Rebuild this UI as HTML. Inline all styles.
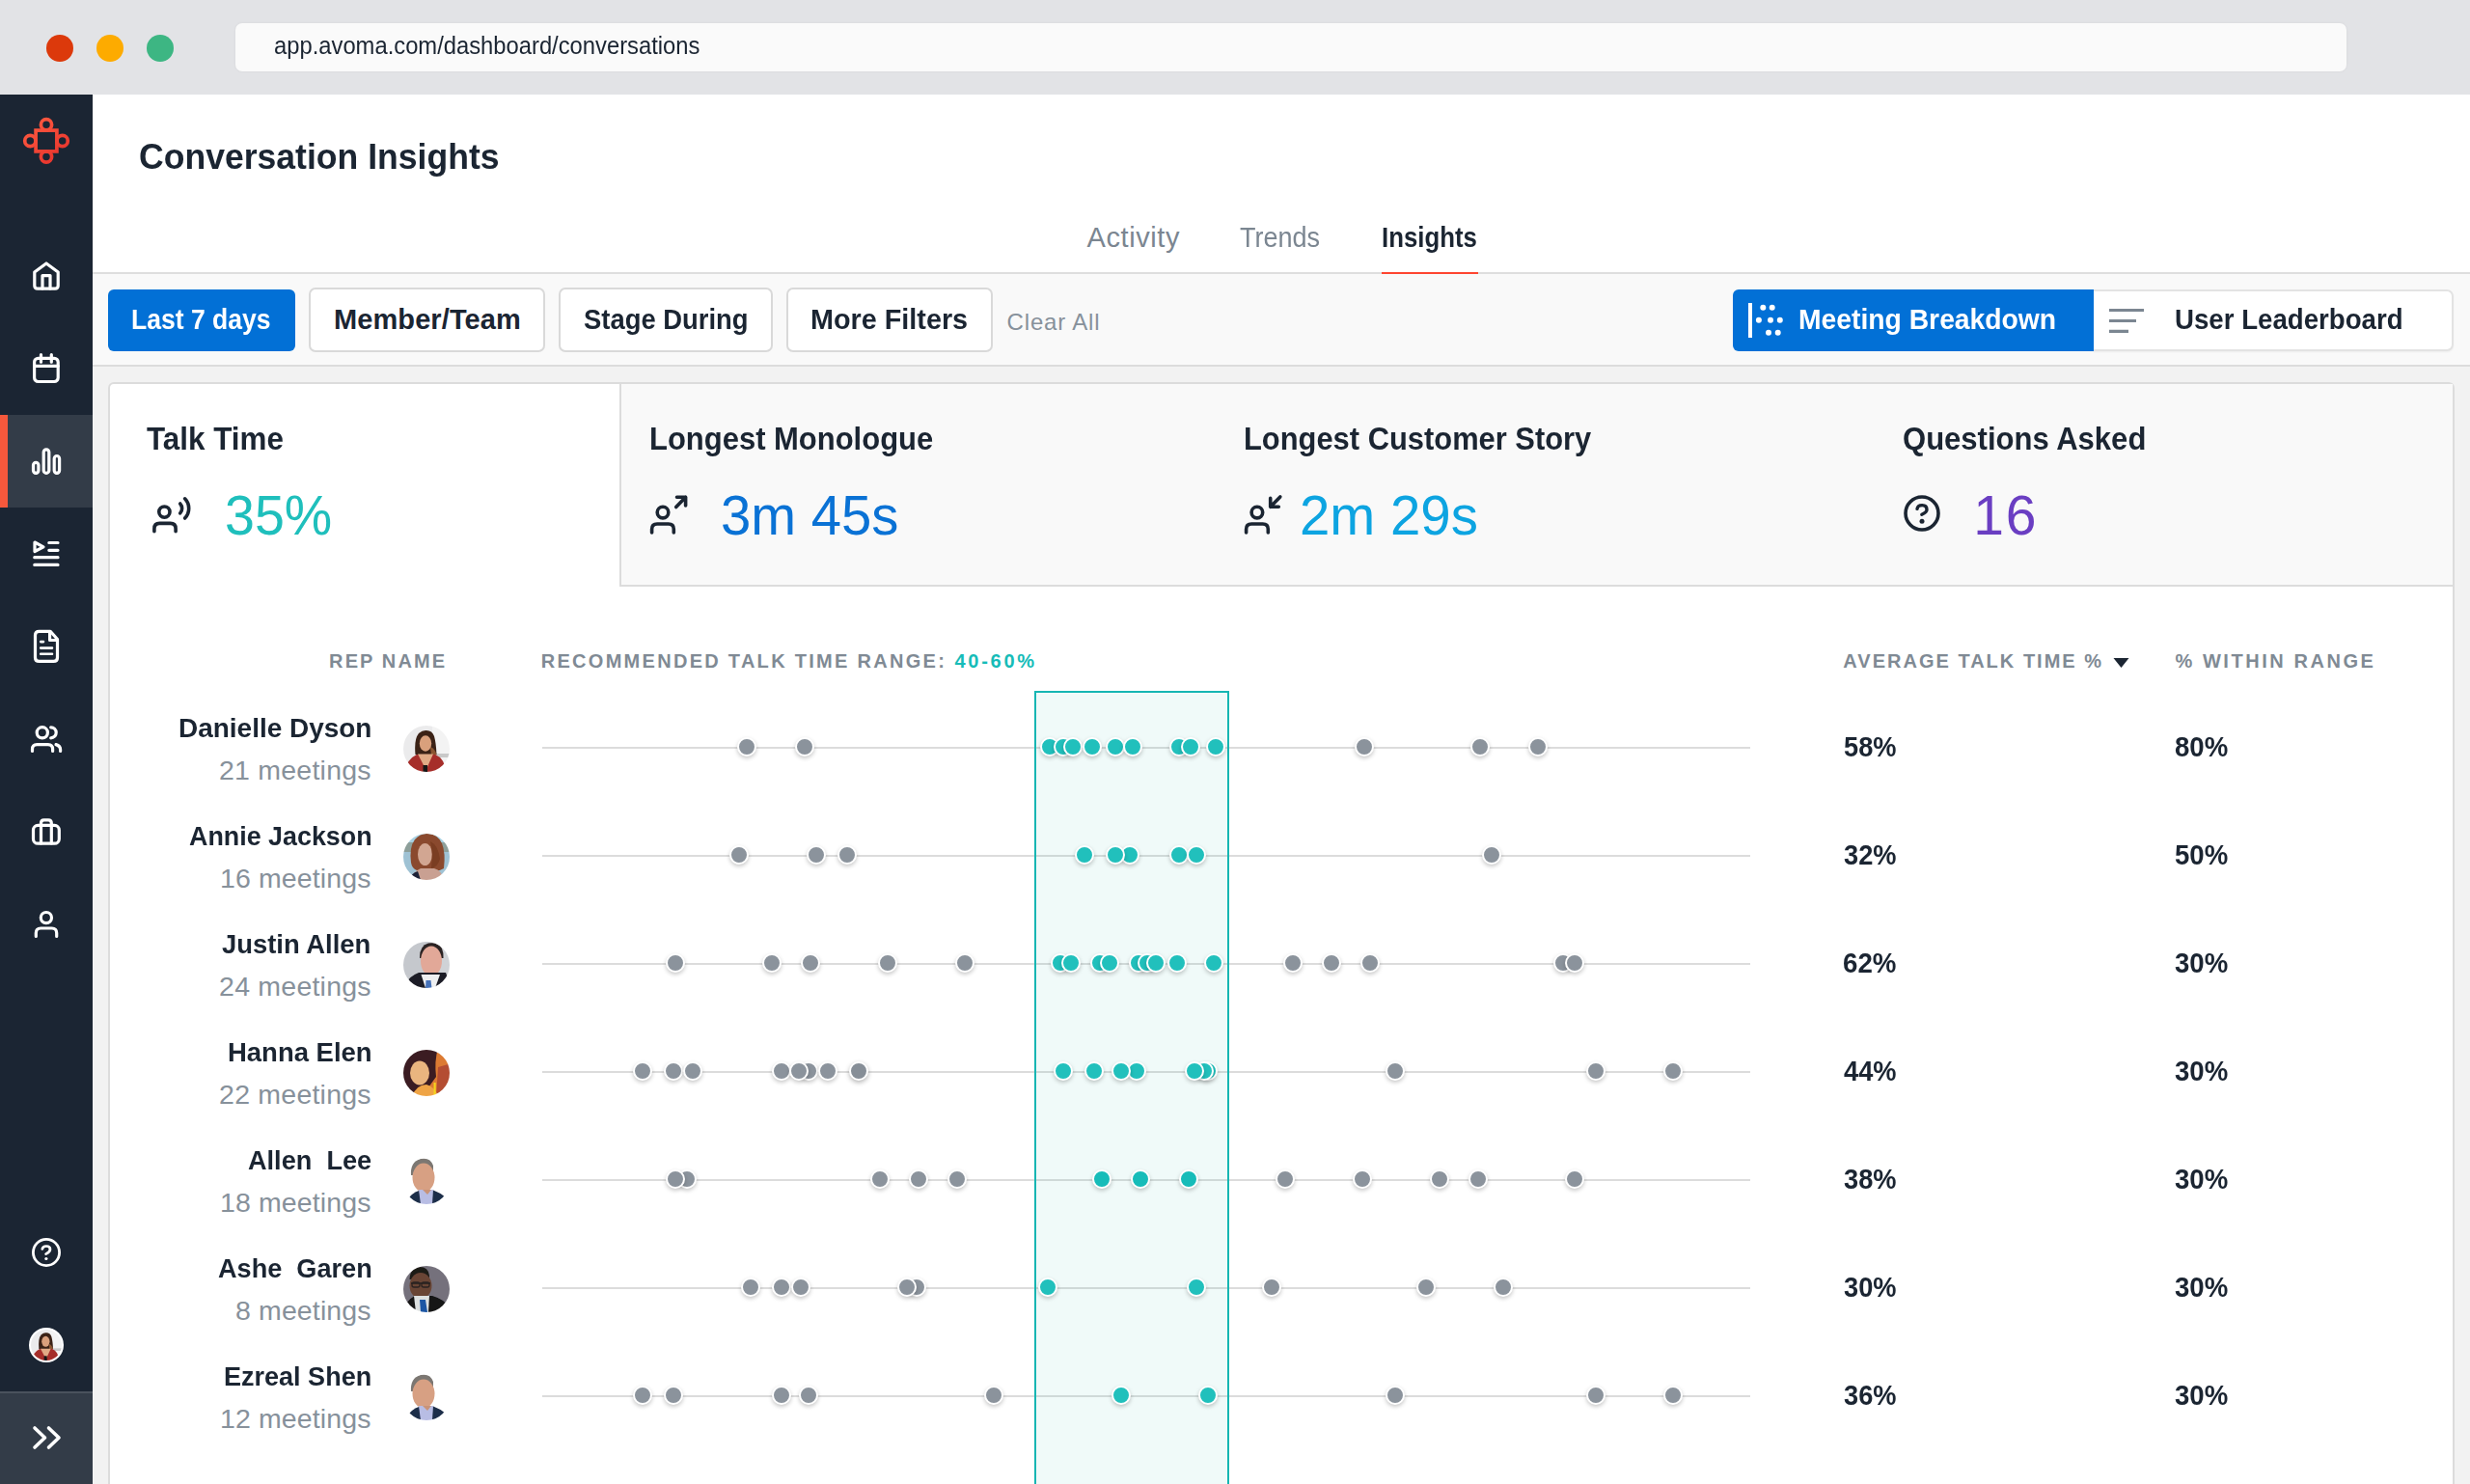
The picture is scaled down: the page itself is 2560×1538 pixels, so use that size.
<!DOCTYPE html><html><head><meta charset="utf-8"><title>Conversation Insights</title>
<style>
html,body{margin:0;padding:0;}
body{width:2560px;height:1538px;overflow:hidden;position:relative;background:#ffffff;font-family:'Liberation Sans', sans-serif;}
.t{position:absolute;white-space:pre;font-family:'Liberation Sans', sans-serif;}
.d{position:absolute;width:16px;height:16px;border:2px solid #fff;border-radius:50%;box-shadow:0 2px 4px rgba(0,0,0,0.22);}
.g{background:#8b939c;}
.c{background:#21c0bc;}
</style></head><body>

<div style="position:absolute;left:0px;top:0px;width:2560px;height:98px;background:#e2e3e6;"></div>
<div style="position:absolute;left:48px;top:36px;width:28px;height:28px;background:#dc390b;border-radius:50%;"></div>
<div style="position:absolute;left:100px;top:36px;width:28px;height:28px;background:#fdab00;border-radius:50%;"></div>
<div style="position:absolute;left:152px;top:36px;width:28px;height:28px;background:#3db683;border-radius:50%;"></div>
<div style="position:absolute;left:244px;top:24px;width:2188px;height:50px;background:#fafafa;border-radius:7px;box-shadow:0 0 3px rgba(0,0,0,0.06);"></div>
<div class="t" style="left:283.55px;top:32.34px;font-size:25px;line-height:30px;color:#1b2532;transform:scaleX(0.9510);transform-origin:0 0;">app.avoma.com/dashboard/conversations</div>
<div style="position:absolute;left:0px;top:98px;width:96px;height:1440px;background:#1b2533;"></div>
<div style="position:absolute;left:0px;top:430px;width:96px;height:96px;background:#333c48;"></div>
<div style="position:absolute;left:0px;top:430px;width:8px;height:96px;background:#f5583c;"></div>
<div style="position:absolute;left:0px;top:1442px;width:96px;height:2px;background:#4a525d;"></div>
<div style="position:absolute;left:0px;top:1444px;width:96px;height:94px;background:#333c48;"></div>
<div class="t" style="left:143.64px;top:140.88px;font-size:37px;line-height:44px;font-weight:700;color:#1b2532;transform:scaleX(0.9613);transform-origin:0 0;">Conversation Insights</div>
<div class="t" style="left:1126.60px;top:229.45px;font-size:29px;line-height:35px;color:#7b8691;letter-spacing:0.580px;">Activity</div>
<div class="t" style="left:1284.50px;top:229.45px;font-size:29px;line-height:35px;color:#7b8691;transform:scaleX(0.9303);transform-origin:0 0;">Trends</div>
<div class="t" style="left:1432.11px;top:229.45px;font-size:29px;line-height:35px;font-weight:700;color:#1b2532;transform:scaleX(0.8896);transform-origin:0 0;">Insights</div>
<div style="position:absolute;left:96px;top:282px;width:2464px;height:2px;background:#dedede;"></div>
<div style="position:absolute;left:1432px;top:282px;width:100px;height:2px;background:#fe4530;"></div>
<div style="position:absolute;left:96px;top:284px;width:2464px;height:94px;background:#f9f9f9;"></div>
<div style="position:absolute;left:96px;top:378px;width:2464px;height:2px;background:#dcdcdc;"></div>
<div style="position:absolute;left:96px;top:380px;width:2464px;height:1158px;background:#f2f2f2;"></div>
<div style="position:absolute;left:112px;top:300px;width:194px;height:64px;background:#0270d6;border-radius:6px;"></div>
<div class="t" style="left:136.08px;top:314.45px;font-size:29px;line-height:35px;font-weight:700;color:#ffffff;transform:scaleX(0.9150);transform-origin:0 0;">Last 7 days</div>
<div style="position:absolute;left:320px;top:298px;width:245px;height:67px;background:#ffffff;border:2px solid #d9d9d9;border-radius:7px;box-sizing:border-box;"></div>
<div class="t" style="left:346.00px;top:314.45px;font-size:29px;line-height:35px;font-weight:700;color:#1b2532;letter-spacing:0.092px;">Member/Team</div>
<div style="position:absolute;left:579px;top:298px;width:222px;height:67px;background:#ffffff;border:2px solid #d9d9d9;border-radius:7px;box-sizing:border-box;"></div>
<div class="t" style="left:604.50px;top:314.45px;font-size:29px;line-height:35px;font-weight:700;color:#1b2532;transform:scaleX(0.9455);transform-origin:0 0;">Stage During</div>
<div style="position:absolute;left:815px;top:298px;width:214px;height:67px;background:#ffffff;border:2px solid #d9d9d9;border-radius:7px;box-sizing:border-box;"></div>
<div class="t" style="left:840.01px;top:314.45px;font-size:29px;line-height:35px;font-weight:700;color:#1b2532;transform:scaleX(0.9923);transform-origin:0 0;">More Filters</div>
<div class="t" style="left:1043.60px;top:319.18px;font-size:24px;line-height:29px;color:#87919b;letter-spacing:0.830px;">Clear All</div>
<div style="position:absolute;left:2170px;top:300px;width:373px;height:64px;background:#ffffff;border:2px solid #e3e3e3;border-left:none;border-radius:0 7px 7px 0;box-sizing:border-box;box-shadow:0 1px 2px rgba(0,0,0,0.05);"></div>
<div style="position:absolute;left:1796px;top:300px;width:374px;height:64px;background:#0270d6;border-radius:6px 0 0 6px;"></div>
<div class="t" style="left:1864.32px;top:314.45px;font-size:29px;line-height:35px;font-weight:700;color:#ffffff;transform:scaleX(0.9752);transform-origin:0 0;">Meeting Breakdown</div>
<div class="t" style="left:2253.65px;top:314.45px;font-size:29px;line-height:35px;font-weight:700;color:#1b2532;transform:scaleX(0.9532);transform-origin:0 0;">User Leaderboard</div>
<div style="position:absolute;left:112px;top:396px;width:2432px;height:1152px;background:#ffffff;border:2px solid #dcdcdc;border-radius:6px;box-sizing:border-box;"></div>
<div style="position:absolute;left:642px;top:398px;width:1900px;height:210px;background:#f9f9f9;border-left:2px solid #dcdcdc;border-bottom:2px solid #dcdcdc;box-sizing:border-box;"></div>
<div class="t" style="left:152.40px;top:434.77px;font-size:33px;line-height:40px;font-weight:700;color:#1b2532;transform:scaleX(0.9515);transform-origin:0 0;">Talk Time</div>
<div class="t" style="left:673.32px;top:434.57px;font-size:33px;line-height:40px;font-weight:700;color:#1b2532;transform:scaleX(0.9386);transform-origin:0 0;">Longest Monologue</div>
<div class="t" style="left:1289.13px;top:434.57px;font-size:33px;line-height:40px;font-weight:700;color:#1b2532;transform:scaleX(0.9357);transform-origin:0 0;">Longest Customer Story</div>
<div class="t" style="left:1971.66px;top:435.07px;font-size:33px;line-height:40px;font-weight:700;color:#1b2532;transform:scaleX(0.9403);transform-origin:0 0;">Questions Asked</div>
<div class="t" style="left:233.05px;top:500.45px;font-size:57px;line-height:68px;color:#1fbfbc;transform:scaleX(0.9746);transform-origin:0 0;">35%</div>
<div class="t" style="left:747.33px;top:500.05px;font-size:57px;line-height:68px;color:#0a72d5;transform:scaleX(0.9868);transform-origin:0 0;">3m 45s</div>
<div class="t" style="left:1346.72px;top:500.05px;font-size:57px;line-height:68px;color:#0da4e1;transform:scaleX(0.9890);transform-origin:0 0;">2m 29s</div>
<div class="t" style="left:2045.20px;top:500.05px;font-size:57px;line-height:68px;color:#6a3ec2;letter-spacing:1.799px;">16</div>
<div class="t" style="left:341.10px;top:673.07px;font-size:20px;line-height:24px;font-weight:700;color:#808a94;letter-spacing:2.110px;">REP NAME</div>
<div class="t" style="left:560.70px;top:673.07px;font-size:20px;line-height:24px;font-weight:700;color:#808a94;letter-spacing:2.292px;">RECOMMENDED TALK TIME RANGE:</div>
<div class="t" style="left:989.50px;top:673.07px;font-size:20px;line-height:24px;font-weight:700;color:#16bcb8;letter-spacing:2.730px;">40-60%</div>
<div class="t" style="left:1910.30px;top:673.07px;font-size:20px;line-height:24px;font-weight:700;color:#808a94;letter-spacing:2.017px;">AVERAGE TALK TIME %</div>
<div class="t" style="left:2254.50px;top:673.07px;font-size:20px;line-height:24px;font-weight:700;color:#808a94;letter-spacing:2.548px;">% WITHIN RANGE</div>
<svg style="position:absolute;left:0;top:0" width="2560" height="1538"><path d="M2190.5,682 L2206.5,682 L2198.5,692 Z" fill="#1b2532"/></svg>
<div class="t" style="left:185.22px;top:736.82px;font-size:28.5px;line-height:34px;font-weight:700;color:#1b2532;transform:scaleX(0.9811);transform-origin:0 0;">Danielle Dyson</div>
<div class="t" style="left:227.00px;top:781.42px;font-size:28.5px;line-height:34px;color:#87919b;letter-spacing:0.229px;">21 meetings</div>
<div class="t" style="left:1911.00px;top:756.95px;font-size:29px;line-height:35px;font-weight:700;color:#1b2532;transform:scaleX(0.9389);transform-origin:0 0;">58%</div>
<div class="t" style="left:2254.40px;top:756.95px;font-size:29px;line-height:35px;font-weight:700;color:#1b2532;transform:scaleX(0.9510);transform-origin:0 0;">80%</div>
<div class="t" style="left:196.00px;top:848.82px;font-size:28.5px;line-height:34px;font-weight:700;color:#1b2532;transform:scaleX(0.9427);transform-origin:0 0;">Annie Jackson</div>
<div class="t" style="left:227.90px;top:893.42px;font-size:28.5px;line-height:34px;color:#87919b;letter-spacing:0.139px;">16 meetings</div>
<div class="t" style="left:1911.00px;top:868.95px;font-size:29px;line-height:35px;font-weight:700;color:#1b2532;transform:scaleX(0.9389);transform-origin:0 0;">32%</div>
<div class="t" style="left:2254.40px;top:868.95px;font-size:29px;line-height:35px;font-weight:700;color:#1b2532;transform:scaleX(0.9510);transform-origin:0 0;">50%</div>
<div class="t" style="left:230.30px;top:960.82px;font-size:28.5px;line-height:34px;font-weight:700;color:#1b2532;transform:scaleX(0.9618);transform-origin:0 0;">Justin Allen</div>
<div class="t" style="left:227.10px;top:1005.42px;font-size:28.5px;line-height:34px;color:#87919b;letter-spacing:0.219px;">24 meetings</div>
<div class="t" style="left:1910.04px;top:980.95px;font-size:29px;line-height:35px;font-weight:700;color:#1b2532;transform:scaleX(0.9553);transform-origin:0 0;">62%</div>
<div class="t" style="left:2254.40px;top:980.95px;font-size:29px;line-height:35px;font-weight:700;color:#1b2532;transform:scaleX(0.9510);transform-origin:0 0;">30%</div>
<div class="t" style="left:236.04px;top:1072.82px;font-size:28.5px;line-height:34px;font-weight:700;color:#1b2532;transform:scaleX(0.9640);transform-origin:0 0;">Hanna Elen</div>
<div class="t" style="left:227.10px;top:1117.42px;font-size:28.5px;line-height:34px;color:#87919b;letter-spacing:0.219px;">22 meetings</div>
<div class="t" style="left:1911.00px;top:1092.95px;font-size:29px;line-height:35px;font-weight:700;color:#1b2532;transform:scaleX(0.9389);transform-origin:0 0;">44%</div>
<div class="t" style="left:2254.40px;top:1092.95px;font-size:29px;line-height:35px;font-weight:700;color:#1b2532;transform:scaleX(0.9510);transform-origin:0 0;">30%</div>
<div class="t" style="left:257.00px;top:1184.82px;font-size:28.5px;line-height:34px;font-weight:700;color:#1b2532;transform:scaleX(0.9516);transform-origin:0 0;">Allen &nbsp;Lee</div>
<div class="t" style="left:227.90px;top:1229.42px;font-size:28.5px;line-height:34px;color:#87919b;letter-spacing:0.139px;">18 meetings</div>
<div class="t" style="left:1911.00px;top:1204.95px;font-size:29px;line-height:35px;font-weight:700;color:#1b2532;transform:scaleX(0.9389);transform-origin:0 0;">38%</div>
<div class="t" style="left:2254.40px;top:1204.95px;font-size:29px;line-height:35px;font-weight:700;color:#1b2532;transform:scaleX(0.9510);transform-origin:0 0;">30%</div>
<div class="t" style="left:225.90px;top:1296.82px;font-size:28.5px;line-height:34px;font-weight:700;color:#1b2532;transform:scaleX(0.9514);transform-origin:0 0;">Ashe &nbsp;Garen</div>
<div class="t" style="left:244.00px;top:1341.42px;font-size:28.5px;line-height:34px;color:#87919b;letter-spacing:0.127px;">8 meetings</div>
<div class="t" style="left:1911.00px;top:1316.95px;font-size:29px;line-height:35px;font-weight:700;color:#1b2532;transform:scaleX(0.9389);transform-origin:0 0;">30%</div>
<div class="t" style="left:2254.40px;top:1316.95px;font-size:29px;line-height:35px;font-weight:700;color:#1b2532;transform:scaleX(0.9510);transform-origin:0 0;">30%</div>
<div class="t" style="left:232.45px;top:1408.82px;font-size:28.5px;line-height:34px;font-weight:700;color:#1b2532;transform:scaleX(0.9481);transform-origin:0 0;">Ezreal Shen</div>
<div class="t" style="left:227.90px;top:1453.42px;font-size:28.5px;line-height:34px;color:#87919b;letter-spacing:0.139px;">12 meetings</div>
<div class="t" style="left:1911.00px;top:1428.95px;font-size:29px;line-height:35px;font-weight:700;color:#1b2532;transform:scaleX(0.9389);transform-origin:0 0;">36%</div>
<div class="t" style="left:2254.40px;top:1428.95px;font-size:29px;line-height:35px;font-weight:700;color:#1b2532;transform:scaleX(0.9510);transform-origin:0 0;">30%</div>
<div style="position:absolute;left:562px;top:774px;width:1252px;height:2px;background:#dcdcdc;"></div>
<div style="position:absolute;left:562px;top:886px;width:1252px;height:2px;background:#dcdcdc;"></div>
<div style="position:absolute;left:562px;top:998px;width:1252px;height:2px;background:#dcdcdc;"></div>
<div style="position:absolute;left:562px;top:1110px;width:1252px;height:2px;background:#dcdcdc;"></div>
<div style="position:absolute;left:562px;top:1222px;width:1252px;height:2px;background:#dcdcdc;"></div>
<div style="position:absolute;left:562px;top:1334px;width:1252px;height:2px;background:#dcdcdc;"></div>
<div style="position:absolute;left:562px;top:1446px;width:1252px;height:2px;background:#dcdcdc;"></div>
<div style="position:absolute;left:1072px;top:716px;width:202px;height:832px;background:rgba(40,186,168,0.07);border:2px solid #17b6b3;box-sizing:border-box;"></div>
<div class="d g" style="left:764.0px;top:764.3px;"></div>
<div class="d g" style="left:824.0px;top:764.3px;"></div>
<div class="d c" style="left:1078.0px;top:764.3px;"></div>
<div class="d c" style="left:1092.0px;top:764.3px;"></div>
<div class="d c" style="left:1102.0px;top:764.3px;"></div>
<div class="d c" style="left:1122.0px;top:764.3px;"></div>
<div class="d c" style="left:1146.0px;top:764.3px;"></div>
<div class="d c" style="left:1164.0px;top:764.3px;"></div>
<div class="d c" style="left:1212.0px;top:764.3px;"></div>
<div class="d c" style="left:1224.0px;top:764.3px;"></div>
<div class="d c" style="left:1250.0px;top:764.3px;"></div>
<div class="d g" style="left:1404.0px;top:764.3px;"></div>
<div class="d g" style="left:1524.0px;top:764.3px;"></div>
<div class="d g" style="left:1584.0px;top:764.3px;"></div>
<div class="d g" style="left:756.0px;top:876.3px;"></div>
<div class="d g" style="left:836.0px;top:876.3px;"></div>
<div class="d g" style="left:868.0px;top:876.3px;"></div>
<div class="d c" style="left:1114.0px;top:876.3px;"></div>
<div class="d c" style="left:1160.6px;top:876.3px;"></div>
<div class="d c" style="left:1145.8px;top:876.3px;"></div>
<div class="d c" style="left:1212.0px;top:876.3px;"></div>
<div class="d c" style="left:1230.0px;top:876.3px;"></div>
<div class="d g" style="left:1536.0px;top:876.3px;"></div>
<div class="d g" style="left:690.0px;top:988.3px;"></div>
<div class="d g" style="left:790.0px;top:988.3px;"></div>
<div class="d g" style="left:830.0px;top:988.3px;"></div>
<div class="d g" style="left:910.0px;top:988.3px;"></div>
<div class="d g" style="left:990.0px;top:988.3px;"></div>
<div class="d c" style="left:1089.4px;top:988.3px;"></div>
<div class="d c" style="left:1100.0px;top:988.3px;"></div>
<div class="d c" style="left:1130.0px;top:988.3px;"></div>
<div class="d c" style="left:1140.0px;top:988.3px;"></div>
<div class="d c" style="left:1169.6px;top:988.3px;"></div>
<div class="d c" style="left:1179.3px;top:988.3px;"></div>
<div class="d c" style="left:1187.8px;top:988.3px;"></div>
<div class="d c" style="left:1210.0px;top:988.3px;"></div>
<div class="d c" style="left:1248.0px;top:988.3px;"></div>
<div class="d g" style="left:1330.0px;top:988.3px;"></div>
<div class="d g" style="left:1370.0px;top:988.3px;"></div>
<div class="d g" style="left:1410.0px;top:988.3px;"></div>
<div class="d g" style="left:1610.0px;top:988.3px;"></div>
<div class="d g" style="left:1622.0px;top:988.3px;"></div>
<div class="d g" style="left:656.0px;top:1100.3px;"></div>
<div class="d g" style="left:688.0px;top:1100.3px;"></div>
<div class="d g" style="left:708.0px;top:1100.3px;"></div>
<div class="d g" style="left:800.0px;top:1100.3px;"></div>
<div class="d g" style="left:828.0px;top:1100.3px;"></div>
<div class="d g" style="left:818.0px;top:1100.3px;"></div>
<div class="d g" style="left:848.0px;top:1100.3px;"></div>
<div class="d g" style="left:880.0px;top:1100.3px;background:#868e97;box-shadow:0 2px 5px rgba(0,0,0,0.3);"></div>
<div class="d c" style="left:1092.0px;top:1100.3px;"></div>
<div class="d c" style="left:1124.0px;top:1100.3px;"></div>
<div class="d c" style="left:1168.0px;top:1100.3px;"></div>
<div class="d c" style="left:1152.0px;top:1100.3px;"></div>
<div class="d c" style="left:1241.5px;top:1100.3px;"></div>
<div class="d c" style="left:1238.0px;top:1100.3px;"></div>
<div class="d c" style="left:1228.0px;top:1100.3px;"></div>
<div class="d g" style="left:1436.0px;top:1100.3px;"></div>
<div class="d g" style="left:1644.0px;top:1100.3px;"></div>
<div class="d g" style="left:1724.0px;top:1100.3px;"></div>
<div class="d g" style="left:702.0px;top:1212.3px;"></div>
<div class="d g" style="left:690.0px;top:1212.3px;"></div>
<div class="d g" style="left:902.0px;top:1212.3px;"></div>
<div class="d g" style="left:942.0px;top:1212.3px;"></div>
<div class="d g" style="left:982.0px;top:1212.3px;"></div>
<div class="d c" style="left:1132.0px;top:1212.3px;background:#17bcb9;"></div>
<div class="d c" style="left:1172.0px;top:1212.3px;background:#17bcb9;"></div>
<div class="d c" style="left:1222.0px;top:1212.3px;background:#17bcb9;"></div>
<div class="d g" style="left:1322.0px;top:1212.3px;"></div>
<div class="d g" style="left:1402.0px;top:1212.3px;"></div>
<div class="d g" style="left:1482.0px;top:1212.3px;"></div>
<div class="d g" style="left:1522.0px;top:1212.3px;"></div>
<div class="d g" style="left:1622.0px;top:1212.3px;"></div>
<div class="d g" style="left:768.0px;top:1324.3px;"></div>
<div class="d g" style="left:800.0px;top:1324.3px;"></div>
<div class="d g" style="left:820.0px;top:1324.3px;"></div>
<div class="d g" style="left:940.0px;top:1324.3px;"></div>
<div class="d g" style="left:930.0px;top:1324.3px;"></div>
<div class="d c" style="left:1076.0px;top:1324.3px;"></div>
<div class="d c" style="left:1230.0px;top:1324.3px;"></div>
<div class="d g" style="left:1308.0px;top:1324.3px;"></div>
<div class="d g" style="left:1468.0px;top:1324.3px;"></div>
<div class="d g" style="left:1548.0px;top:1324.3px;"></div>
<div class="d g" style="left:656.0px;top:1436.3px;"></div>
<div class="d g" style="left:688.0px;top:1436.3px;"></div>
<div class="d g" style="left:800.0px;top:1436.3px;"></div>
<div class="d g" style="left:828.0px;top:1436.3px;"></div>
<div class="d g" style="left:1020.0px;top:1436.3px;"></div>
<div class="d c" style="left:1152.0px;top:1436.3px;"></div>
<div class="d c" style="left:1242.0px;top:1436.3px;"></div>
<div class="d g" style="left:1436.0px;top:1436.3px;"></div>
<div class="d g" style="left:1644.0px;top:1436.3px;"></div>
<div class="d g" style="left:1724.0px;top:1436.3px;"></div>
<svg style="position:absolute;left:0;top:0" width="2560" height="1538">
<defs><linearGradient id="lg" gradientUnits="userSpaceOnUse" x1="30" y1="122" x2="66" y2="170"><stop offset="0" stop-color="#ff5d42"/><stop offset="1" stop-color="#e52f2a"/></linearGradient></defs>
<g fill="none" stroke="url(#lg)" stroke-width="3.7"><rect x="37.1" y="135.1" width="21.8" height="21.8"/><circle cx="48" cy="129.2" r="5.6"/><circle cx="48" cy="162.6" r="5.6"/><circle cx="31.3" cy="146" r="5.6"/><circle cx="64.7" cy="146" r="5.6"/></g>
<g fill="none" stroke="#ffffff" stroke-width="3.2" stroke-linecap="round" stroke-linejoin="round">
<path d="M35.8,282 L48,273 L60.2,282 L60.2,296 Q60.2,299.2 57,299.2 L39,299.2 Q35.8,299.2 35.8,296 Z"/>
<path d="M44,299 L44,285.6 L52,285.6 L52,299"/>
<rect x="35.6" y="371.3" width="24.6" height="24.2" rx="4"/><path d="M35.6,379.3 L60.2,379.3"/><path d="M42.5,367.6 L42.5,375.2 M53.3,367.6 L53.3,375.2"/>
<rect x="34.5" y="479.4" width="5.4" height="10.9" rx="2.7"/><rect x="45.2" y="465.8" width="5.6" height="24.5" rx="2.8"/><rect x="56.2" y="472.5" width="5.4" height="17.8" rx="2.7"/>
<path d="M36,562 L45,566.8 L36,571.5 Z"/><path d="M50.8,562.5 L60,562.5 M50.8,570.3 L60,570.3 M35.8,577.7 L60,577.7 M35.8,585.4 L60,585.4"/>
<path d="M52.2,654.3 L40.5,654.3 Q36.5,654.3 36.5,658.3 L36.5,681.4 Q36.5,685.4 40.5,685.4 L55.5,685.4 Q59.5,685.4 59.5,681.4 L59.5,662.5 Z"/><path d="M51.6,654.6 L51.6,663.5 L59.2,663.5"/>
<path d="M42.2,665.1 L45,665.1 M42.2,671.6 L54,671.6 M42.2,677.8 L54,677.8" stroke-width="2.6"/>
<circle cx="43.8" cy="759.3" r="5.6"/><path d="M52.7,753.8 A5.5,5.5 0 0 1 52.7,764.8"/><path d="M33.5,778.4 L33.5,776.5 Q33.5,771.6 38.4,771.6 L49.7,771.6 Q54.6,771.6 54.6,776.5 L54.6,778.4"/><path d="M58,771.6 Q62.6,773 62.6,777 L62.6,778.4"/>
<rect x="34.5" y="855.4" width="26.8" height="18.8" rx="4.8"/><path d="M42.5,874 L42.5,853 Q42.5,849.9 45.6,849.9 L50.2,849.9 Q53.3,849.9 53.3,853 L53.3,874"/>
<circle cx="47.9" cy="951.1" r="5.6"/><path d="M37.3,970.4 L37.3,967 Q37.3,962 42.3,962 L53.7,962 Q58.7,962 58.7,967 L58.7,970.4"/>
<circle cx="48" cy="1298" r="13.6" stroke-width="2.8"/><path d="M43.8,1294.4 Q44.4,1291.5 48,1291.5 Q52,1291.5 52,1294.8 Q52,1297.4 47.6,1299.6" stroke-width="2.7"/>
</g>
<circle cx="47.9" cy="1304.5" r="1.6" fill="#fff"/>
<path d="M36,1480 L46.5,1490 L36,1500 M50.5,1480 L61,1490 L50.5,1500" fill="none" stroke="#fff" stroke-width="3.6" stroke-linecap="round" stroke-linejoin="round"/>
<g fill="none" stroke="#1b2532" stroke-width="3.6" stroke-linecap="round" stroke-linejoin="round">
<circle cx="170.4" cy="530.6" r="5.6"/><path d="M159.9,550.8 L159.9,547.9 Q159.9,542.4 165.4,542.4 L176.6,542.4 Q182.1,542.4 182.1,547.9 L182.1,550.8"/>
<path d="M186.7,522 A7.3,7.3 0 0 1 186.7,531.9"/><path d="M191.6,516.8 A14.5,14.5 0 0 1 191.6,537"/>
<circle cx="687" cy="531.1" r="5.8"/><path d="M675.6,552 L675.6,548.5 Q675.6,543 681.1,543 L692.8,543 Q698.3,543 698.3,548.5 L698.3,552"/>
<path d="M700.7,525.5 L710.6,515.2 M701.5,515.2 L710.6,515.2 L710.6,524"/>
<circle cx="1302.9" cy="531.1" r="5.8"/><path d="M1291.6,552 L1291.6,548.5 Q1291.6,543 1297.1,543 L1308.8,543 Q1314.3,543 1314.3,548.5 L1314.3,552"/>
<path d="M1326.8,514.9 L1316.7,525.3 M1316.7,516.4 L1316.7,525.3 L1325.3,525.3"/>
<circle cx="1992" cy="532" r="17"/><path d="M1987,527.4 Q1987.6,523.6 1992.2,523.6 Q1997,523.6 1997,528.3 Q1997,531 1991.8,533.3" stroke-width="3.4"/>
</g>
<circle cx="1992" cy="540.3" r="2.5" fill="#1b2532"/>
<rect x="1812" y="314" width="4" height="36" fill="#fff"/>
<circle cx="1827.3" cy="318.8" r="3" fill="#fff"/>
<circle cx="1836.7" cy="318.8" r="3" fill="#fff"/>
<circle cx="1822.9" cy="331.8" r="3" fill="#fff"/>
<circle cx="1835" cy="331.8" r="3" fill="#fff"/>
<circle cx="1844.8" cy="331.8" r="3" fill="#fff"/>
<circle cx="1833" cy="344.7" r="3" fill="#fff"/>
<circle cx="1842.7" cy="344.7" r="3" fill="#fff"/>
<path d="M2186,321.5 L2222,321.5 M2186,332.5 L2214,332.5 M2186,343.3 L2206,343.3" stroke="#7b8691" stroke-width="3.2"/>
</svg>
<svg style="position:absolute;left:418.0px;top:752.0px" width="48" height="48" viewBox="0 0 48 48"><defs><clipPath id="cpdanielle776"><circle cx="24" cy="24" r="24"/></clipPath><filter id="bldanielle776" x="-10%" y="-10%" width="120%" height="120%"><feGaussianBlur stdDeviation="0.7"/></filter></defs><g clip-path="url(#cpdanielle776)"><g filter="url(#bldanielle776)"><rect x="-2" y="-2" width="52" height="52" fill="#ebebec"/><rect x="30" y="-2" width="20" height="52" fill="#f3f3f3"/><rect x="30" y="29" width="20" height="4" fill="#c9c9c9"/><path d="M12.5,30 Q11,14 16,8 Q20,4.5 24,5 Q30,5 32,11 Q34,18 34.5,30 Q30,32 24,31 Q17,32 12.5,30 Z" fill="#3a2318"/><path d="M28,22 Q33,24 34.5,30 L29,31 Z" fill="#8a5530"/><ellipse cx="23" cy="18.5" rx="6.2" ry="8.2" fill="#d9a07c"/><path d="M2,48 Q3,35 14,30 L33,30 Q43,34 44,48 Z" fill="#a62e2c"/><path d="M15,29.5 L31,29.5 Q27,38 24.5,44 L22.5,44 Q19,37 15,29.5 Z" fill="#e1ab86"/><rect x="20.5" y="41" width="4.5" height="8" fill="#121212"/></g></g></svg>
<svg style="position:absolute;left:418.0px;top:864.0px" width="48" height="48" viewBox="0 0 48 48"><defs><clipPath id="cpannie888"><circle cx="24" cy="24" r="24"/></clipPath><filter id="blannie888" x="-10%" y="-10%" width="120%" height="120%"><feGaussianBlur stdDeviation="0.7"/></filter></defs><g clip-path="url(#cpannie888)"><g filter="url(#blannie888)"><rect x="-2" y="-2" width="52" height="52" fill="#a7d0e2"/><rect x="-2" y="9" width="52" height="10" fill="#8d9f9a"/><rect x="-2" y="19" width="52" height="31" fill="#9fc2d4"/><path d="M8,30 Q6,14 12,6 Q18,-1 26,0 Q36,1 40,10 Q44,20 42,36 Q36,40 28,38 L14,38 Q9,36 8,30 Z" fill="#8a4a2d"/><ellipse cx="22.5" cy="21.5" rx="7.5" ry="11.5" fill="#d2a692"/><path d="M28,8 Q36,12 38,26 Q36,34 29,36 Q31,20 28,8 Z" fill="#7a3c22"/><path d="M8,48 Q10,39 18,36 L32,36 Q40,38 42,48 Z" fill="#c9a092"/><path d="M6,48 Q8,41 15,39 L18,48 Z" fill="#1c2438"/></g></g></svg>
<svg style="position:absolute;left:418.0px;top:976.0px" width="48" height="48" viewBox="0 0 48 48"><defs><clipPath id="cpjustin1000"><circle cx="24" cy="24" r="24"/></clipPath><filter id="bljustin1000" x="-10%" y="-10%" width="120%" height="120%"><feGaussianBlur stdDeviation="0.7"/></filter></defs><g clip-path="url(#cpjustin1000)"><g filter="url(#bljustin1000)"><rect x="-2" y="-2" width="52" height="52" fill="#c5c8cd"/><rect x="36" y="-2" width="14" height="52" fill="#cfd2d6"/><path d="M17,16 Q17,4 26,1.5 Q36,0 40,7 Q42,12 41.5,17 L17,17 Z" fill="#2a2222"/><ellipse cx="29" cy="20" rx="11" ry="15.5" fill="#e2a898"/><path d="M1,48 Q3,37 16,32 L44,32 Q47,38 48,48 Z" fill="#1d1e25"/><path d="M18.5,34 L38,34 L33,48 L23,48 Z" fill="#eeeff1"/><path d="M23.5,40 L28.5,40 L29.5,48 L23,48 Z" fill="#4571b8"/></g></g></svg>
<svg style="position:absolute;left:418.0px;top:1088.0px" width="48" height="48" viewBox="0 0 48 48"><defs><clipPath id="cphanna1112"><circle cx="24" cy="24" r="24"/></clipPath><filter id="blhanna1112" x="-10%" y="-10%" width="120%" height="120%"><feGaussianBlur stdDeviation="0.7"/></filter></defs><g clip-path="url(#cphanna1112)"><g filter="url(#blhanna1112)"><rect x="-2" y="-2" width="52" height="52" fill="#dc7a31"/><path d="M36,18 L50,14 L50,50 L34,50 Z" fill="#b44d30"/><path d="M-2,-2 L36,-2 Q32,12 34,28 Q28,36 20,48 L-2,48 Z" fill="#3b1c22"/><ellipse cx="17" cy="24" rx="10" ry="12.5" fill="#eab57f"/><path d="M9,48 Q14,36 24,36 Q32,38 36,48 Z" fill="#efa445"/><rect x="31.5" y="34" width="2.2" height="14" fill="#f4d41f"/></g></g></svg>
<svg style="position:absolute;left:418.0px;top:1200.0px" width="48" height="48" viewBox="0 0 48 48"><defs><clipPath id="cpallen1224"><circle cx="24" cy="24" r="24"/></clipPath><filter id="blallen1224" x="-10%" y="-10%" width="120%" height="120%"><feGaussianBlur stdDeviation="0.7"/></filter></defs><g clip-path="url(#cpallen1224)"><g filter="url(#blallen1224)"><rect x="-2" y="-2" width="52" height="52" fill="#ffffff"/><path d="M8,18 Q7,4 18,1 Q28,-1 31,8 L31,18 Z" fill="#7b7772"/><ellipse cx="21" cy="20.5" rx="11.5" ry="15" fill="#d7a083"/><path d="M6,41 Q12,34 20,33 L30,33 Q38,36 44,41 Q36,50 24,50 Q12,50 6,41 Z" fill="#1f2d48"/><path d="M16,33 L31,33 L30,48 L18,48 Z" fill="#b8bde4"/><path d="M20,33 L29,33 L25,38 Z" fill="#c99378"/></g></g></svg>
<svg style="position:absolute;left:418.0px;top:1312.0px" width="48" height="48" viewBox="0 0 48 48"><defs><clipPath id="cpashe1336"><circle cx="24" cy="24" r="24"/></clipPath><filter id="blashe1336" x="-10%" y="-10%" width="120%" height="120%"><feGaussianBlur stdDeviation="0.7"/></filter></defs><g clip-path="url(#cpashe1336)"><g filter="url(#blashe1336)"><rect x="-2" y="-2" width="52" height="52" fill="#75717c"/><path d="M6.5,14 Q7,2 17,1 Q26,1 27,10 L27,14 Z" fill="#1f1b19"/><ellipse cx="18" cy="20.5" rx="11.5" ry="13.5" fill="#694434"/><path d="M8,18 L28,18" stroke="#2a2320" stroke-width="1.6"/><rect x="9" y="17" width="8" height="5" rx="2" fill="none" stroke="#2a2320" stroke-width="1.3"/><rect x="19" y="17" width="8" height="5" rx="2" fill="none" stroke="#2a2320" stroke-width="1.3"/><path d="M0,48 Q2,36 12,31 L30,31 Q44,35 48,44 L48,48 Z" fill="#131314"/><path d="M11,31 L27,31 L26,48 L13,48 Z" fill="#dde1e1"/><path d="M17,35 L23,35 L25,48 L18,48 Z" fill="#1d56a4"/></g></g></svg>
<svg style="position:absolute;left:418.0px;top:1424.0px" width="48" height="48" viewBox="0 0 48 48"><defs><clipPath id="cpallen1448"><circle cx="24" cy="24" r="24"/></clipPath><filter id="blallen1448" x="-10%" y="-10%" width="120%" height="120%"><feGaussianBlur stdDeviation="0.7"/></filter></defs><g clip-path="url(#cpallen1448)"><g filter="url(#blallen1448)"><rect x="-2" y="-2" width="52" height="52" fill="#ffffff"/><path d="M8,18 Q7,4 18,1 Q28,-1 31,8 L31,18 Z" fill="#7b7772"/><ellipse cx="21" cy="20.5" rx="11.5" ry="15" fill="#d7a083"/><path d="M6,41 Q12,34 20,33 L30,33 Q38,36 44,41 Q36,50 24,50 Q12,50 6,41 Z" fill="#1f2d48"/><path d="M16,33 L31,33 L30,48 L18,48 Z" fill="#b8bde4"/><path d="M20,33 L29,33 L25,38 Z" fill="#c99378"/></g></g></svg>
<div style="position:absolute;left:30px;top:1376px;width:36px;height:36px;border-radius:50%;background:#fff;"></div>
<svg style="position:absolute;left:32.0px;top:1378.0px" width="32" height="32" viewBox="0 0 48 48"><defs><clipPath id="cpdanielle1394"><circle cx="24" cy="24" r="24"/></clipPath><filter id="bldanielle1394" x="-10%" y="-10%" width="120%" height="120%"><feGaussianBlur stdDeviation="0.7"/></filter></defs><g clip-path="url(#cpdanielle1394)"><g filter="url(#bldanielle1394)"><rect x="-2" y="-2" width="52" height="52" fill="#ebebec"/><rect x="30" y="-2" width="20" height="52" fill="#f3f3f3"/><rect x="30" y="29" width="20" height="4" fill="#c9c9c9"/><path d="M12.5,30 Q11,14 16,8 Q20,4.5 24,5 Q30,5 32,11 Q34,18 34.5,30 Q30,32 24,31 Q17,32 12.5,30 Z" fill="#3a2318"/><path d="M28,22 Q33,24 34.5,30 L29,31 Z" fill="#8a5530"/><ellipse cx="23" cy="18.5" rx="6.2" ry="8.2" fill="#d9a07c"/><path d="M2,48 Q3,35 14,30 L33,30 Q43,34 44,48 Z" fill="#a62e2c"/><path d="M15,29.5 L31,29.5 Q27,38 24.5,44 L22.5,44 Q19,37 15,29.5 Z" fill="#e1ab86"/><rect x="20.5" y="41" width="4.5" height="8" fill="#121212"/></g></g></svg>
</body></html>
